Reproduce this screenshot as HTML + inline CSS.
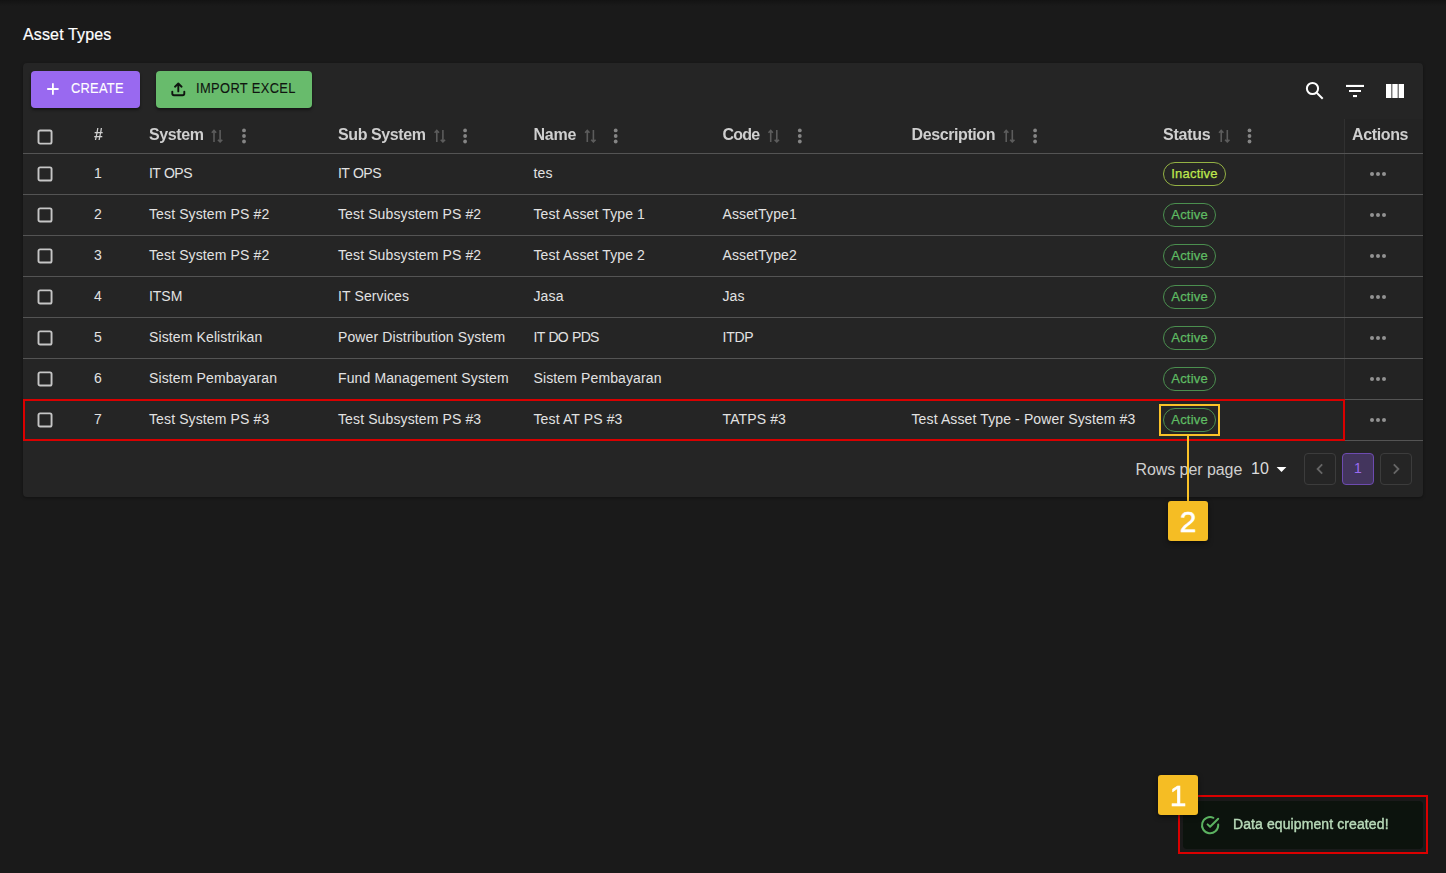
<!DOCTYPE html>
<html lang="en">
<head>
<meta charset="utf-8">
<title>Asset Types</title>
<style>
*{box-sizing:border-box;margin:0;padding:0}
html,body{width:1446px;height:873px;overflow:hidden}
body{background:#1a1a1a;font-family:"Liberation Sans",sans-serif;color:#e2e2e2;position:relative;font-size:14px}
.topshade{position:absolute;left:0;top:0;width:1446px;height:6px;background:linear-gradient(#131313,#1a1a1a)}
h1{position:absolute;left:23px;top:26px;font-size:16px;font-weight:400;line-height:18px;color:#fff;letter-spacing:.15px;white-space:nowrap;-webkit-text-stroke:.2px #fff}
.card{position:absolute;left:23px;top:63px;width:1400px;height:434px;background:#252525;border-radius:4px;box-shadow:0 1px 3px rgba(0,0,0,.35)}
.toolbar{position:absolute;left:0;top:0;width:1400px;height:53px}
.btn{position:absolute;top:8px;height:37px;border-radius:4px;font-size:14px;line-height:37px;white-space:nowrap;box-shadow:0 2px 3px rgba(0,0,0,.45)}
.btn svg{position:absolute}
.btn span{position:absolute;top:-1px;display:inline-block;transform-origin:0 50%;transform:scaleX(.92)}
.b-create{left:8px;width:109px;background:#9969f0;color:#fff}
.b-create span{left:40px;letter-spacing:.28px;-webkit-text-stroke:.12px #fff}
.b-import{left:133px;width:156px;background:#68bb6c;color:#101510}
.b-import span{left:39.5px;letter-spacing:.4px;-webkit-text-stroke:.12px #101510}
.ticon{position:absolute}
/* table */
.row{position:absolute;left:0;width:1400px;height:41px;border-bottom:1px solid #545454}
.hrow{top:53px;height:38px;will-change:transform}
.cell{position:absolute;top:0;height:100%;white-space:nowrap;letter-spacing:.12px}
.row .cell{line-height:39px}
.hrow .cell{line-height:38px;font-size:16px;font-weight:700;color:#cfcfcf}
.cb{position:absolute;left:14px;width:17px;height:17px}
.row .cb{top:12px}
.hrow .cb{top:13px}
.c1{left:71px}.c2{left:126px}.c3{left:315px}.c4{left:510.5px}.c5{left:699.5px}.c6{left:888.5px}.c7{left:1140px}
.act{position:absolute;left:1321px;top:0;width:79px;height:40px;background:#232323;border-left:1px solid #313131}
.hrow .act{height:34px;top:3px}
.act b{position:absolute;left:7px;top:-3px;line-height:38px;font-size:16px;font-weight:700;color:#cfcfcf;letter-spacing:-.37px}
.dots{position:absolute;left:24.8px;top:17.8px;width:17px;height:5px}
.dots i{position:absolute;top:0;width:4.4px;height:4.4px;border-radius:50%;background:#929292}
.dots i:nth-child(1){left:0}.dots i:nth-child(2){left:6.1px}.dots i:nth-child(3){left:12.2px}
.sort{position:absolute;top:12px}
.keb{position:absolute;top:12px}
.chip{position:absolute;left:0;top:8px;height:24px;border-radius:12px;border:1px solid;font-size:13px;line-height:22px;padding:0 0 0 7.3px;letter-spacing:.2px;-webkit-text-stroke:.25px}
.chip.a{color:#5fbb63;border-color:#4b8f4f;width:53px}
.chip.i{color:#bfe84e;border-color:#94b244;width:63px}
/* footer */
.rpp{position:absolute;left:1112.5px;top:397px;font-size:16px;line-height:20px;color:#cfcfcf;letter-spacing:-.07px;white-space:nowrap}
.rpn{position:absolute;left:1228px;top:396px;font-size:16px;line-height:20px;color:#dcdcdc;white-space:nowrap}
.tri{position:absolute;left:1253px;top:403px}
.pg{position:absolute;top:390px;width:32px;height:32px;border:1px solid #3c3c3c;border-radius:4px;text-align:center;line-height:29px;font-size:14px}
.pg.on{background:#43355d;border-color:#6d4bb0;color:#9b6bf2}
.pg svg{position:absolute;left:9px;top:9px}
/* annotations */
.red{position:absolute;border:2px solid #da0000}
.yel{position:absolute;border:2px solid #fbc328}
.badge{position:absolute;width:40px;height:40px;background:#f5bd24;border-radius:3px;color:#fff;font-size:30px;line-height:41px;text-align:center;-webkit-text-stroke:.5px #fff;box-shadow:0 2px 5px rgba(0,0,0,.5)}
.vline{position:absolute;left:1187px;top:436px;width:2px;height:66px;background:#fbc328}
.toast{position:absolute;left:1183px;top:801px;width:240px;height:48px;background:#0c130d;border-radius:4px;will-change:transform}
.toast span{position:absolute;left:50px;top:14px;font-size:14px;line-height:18px;color:#b8dab9;letter-spacing:.1px;white-space:nowrap;-webkit-text-stroke:.4px #b8dab9}
.toast svg{position:absolute;left:17px;top:14px;overflow:visible}
</style>
</head>
<body>
<div class="topshade"></div>
<h1>Asset Types</h1>

<div class="card">
  <div class="toolbar">
    <div class="btn b-create">
      <svg style="left:15px;top:11px" width="14" height="14" viewBox="0 0 14 14"><path d="M6.9 1.3v11.4M1.2 7h11.4" stroke="#fff" stroke-width="1.8" fill="none"/></svg>
      <span>CREATE</span>
    </div>
    <div class="btn b-import">
      <svg style="left:15px;top:11px" width="15" height="15" viewBox="0 0 15 15" fill="none" stroke="#101510" stroke-width="1.9" stroke-linecap="round" stroke-linejoin="round"><path d="M7.3 9.4V1.7M4 4.7l3.3-3.2 3.3 3.2M1.3 9.6v1.9c0 1 .8 1.7 1.7 1.7h8.6c1 0 1.7-.8 1.7-1.7V9.6"/></svg>
      <span>IMPORT EXCEL</span>
    </div>
    <svg class="ticon" style="left:1282px;top:18px" width="19" height="19" viewBox="0 0 19 19" fill="none" stroke="#fff" stroke-width="2"><circle cx="7.5" cy="7.5" r="5.6"/><path d="M11.7 11.7l6 6"/></svg>
    <svg class="ticon" style="left:1323px;top:21px" width="18" height="14" viewBox="0 0 18 14" fill="#fff"><rect x="0" y="0.9" width="18" height="2.1"/><rect x="3" y="6" width="12" height="2"/><rect x="7" y="11" width="4" height="2.1"/></svg>
    <svg class="ticon" style="left:1363px;top:21px" width="18" height="14" viewBox="0 0 18 14" fill="#fff"><rect x="0" y="0" width="5.4" height="14"/><rect x="6.3" y="0" width="5.4" height="14"/><rect x="12.6" y="0" width="5.4" height="14"/></svg>
  </div>

  <div class="row hrow">
    <svg class="cb" viewBox="0 0 17 17"><rect x="1.5" y="1.55" width="13.05" height="13.1" rx="1.6" fill="none" stroke="#c6c6c6" stroke-width="1.9"/></svg>
    <div class="cell c1">#</div>
    <div class="cell c2" style="letter-spacing:-.4px">System</div>
    <svg class="sort" style="left:188px" width="13" height="15" viewBox="0 0 13 15" fill="none" stroke="#5c5c5c" stroke-width="1.6"><path transform="translate(0.0 .6)" d="M3 13.5V1.9M.8 4.1L3 1.9l2.2 2.2M9.1 1.5v11.8M6.9 11.1l2.2 2.2 2.2-2.2"/></svg>
    <svg class="keb" style="left:218px" width="7" height="18" viewBox="0 0 7 18" fill="#858585"><circle cx="3.0" cy="2.4" r="1.9"/><circle cx="3.0" cy="8" r="1.9"/><circle cx="3.0" cy="13.5" r="1.9"/></svg>
    <div class="cell c3" style="letter-spacing:-.4px">Sub System</div>
    <svg class="sort" style="left:410px" width="13" height="15" viewBox="0 0 13 15" fill="none" stroke="#5c5c5c" stroke-width="1.6"><path transform="translate(0.8 .6)" d="M3 13.5V1.9M.8 4.1L3 1.9l2.2 2.2M9.1 1.5v11.8M6.9 11.1l2.2 2.2 2.2-2.2"/></svg>
    <svg class="keb" style="left:439px" width="7" height="18" viewBox="0 0 7 18" fill="#858585"><circle cx="3.1" cy="2.4" r="1.9"/><circle cx="3.1" cy="8" r="1.9"/><circle cx="3.1" cy="13.5" r="1.9"/></svg>
    <div class="cell c4" style="letter-spacing:-.2px">Name</div>
    <svg class="sort" style="left:561px" width="13" height="15" viewBox="0 0 13 15" fill="none" stroke="#5c5c5c" stroke-width="1.6"><path transform="translate(0.3 .6)" d="M3 13.5V1.9M.8 4.1L3 1.9l2.2 2.2M9.1 1.5v11.8M6.9 11.1l2.2 2.2 2.2-2.2"/></svg>
    <svg class="keb" style="left:589px" width="7" height="18" viewBox="0 0 7 18" fill="#858585"><circle cx="3.7" cy="2.4" r="1.9"/><circle cx="3.7" cy="8" r="1.9"/><circle cx="3.7" cy="13.5" r="1.9"/></svg>
    <div class="cell c5" style="letter-spacing:-.8px">Code</div>
    <svg class="sort" style="left:744px" width="13" height="15" viewBox="0 0 13 15" fill="none" stroke="#5c5c5c" stroke-width="1.6"><path transform="translate(0.7 .6)" d="M3 13.5V1.9M.8 4.1L3 1.9l2.2 2.2M9.1 1.5v11.8M6.9 11.1l2.2 2.2 2.2-2.2"/></svg>
    <svg class="keb" style="left:773px" width="7" height="18" viewBox="0 0 7 18" fill="#858585"><circle cx="3.8" cy="2.4" r="1.9"/><circle cx="3.8" cy="8" r="1.9"/><circle cx="3.8" cy="13.5" r="1.9"/></svg>
    <div class="cell c6" style="letter-spacing:-.4px">Description</div>
    <svg class="sort" style="left:980px" width="13" height="15" viewBox="0 0 13 15" fill="none" stroke="#5c5c5c" stroke-width="1.6"><path transform="translate(0.2 .6)" d="M3 13.5V1.9M.8 4.1L3 1.9l2.2 2.2M9.1 1.5v11.8M6.9 11.1l2.2 2.2 2.2-2.2"/></svg>
    <svg class="keb" style="left:1009px" width="7" height="18" viewBox="0 0 7 18" fill="#858585"><circle cx="3.1" cy="2.4" r="1.9"/><circle cx="3.1" cy="8" r="1.9"/><circle cx="3.1" cy="13.5" r="1.9"/></svg>
    <div class="cell c7" style="letter-spacing:-.23px">Status</div>
    <svg class="sort" style="left:1195px" width="13" height="15" viewBox="0 0 13 15" fill="none" stroke="#5c5c5c" stroke-width="1.6"><path transform="translate(0.2 .6)" d="M3 13.5V1.9M.8 4.1L3 1.9l2.2 2.2M9.1 1.5v11.8M6.9 11.1l2.2 2.2 2.2-2.2"/></svg>
    <svg class="keb" style="left:1223px" width="7" height="18" viewBox="0 0 7 18" fill="#858585"><circle cx="3.5" cy="2.4" r="1.9"/><circle cx="3.5" cy="8" r="1.9"/><circle cx="3.5" cy="13.5" r="1.9"/></svg>
    <div class="act"><b>Actions</b></div>
  </div>

  <div class="row" style="top:91px"><svg class="cb" viewBox="0 0 17 17"><rect x="1.5" y="1.4" width="13.05" height="13.1" rx="1.6" fill="none" stroke="#c6c6c6" stroke-width="1.9"/></svg><div class="cell c1">1</div><div class="cell c2"><span style="letter-spacing:-.55px;word-spacing:.6px">IT OPS</span></div><div class="cell c3"><span style="letter-spacing:-.55px;word-spacing:.6px">IT OPS</span></div><div class="cell c4">tes</div><div class="cell c5"></div><div class="cell c6"></div><div class="cell c7"><span class="chip i">Inactive</span></div><div class="act"><span class="dots"><i></i><i></i><i></i></span></div></div>
  <div class="row" style="top:132px"><svg class="cb" viewBox="0 0 17 17"><rect x="1.5" y="1.4" width="13.05" height="13.1" rx="1.6" fill="none" stroke="#c6c6c6" stroke-width="1.9"/></svg><div class="cell c1">2</div><div class="cell c2">Test System PS #2</div><div class="cell c3">Test Subsystem PS #2</div><div class="cell c4">Test Asset Type 1</div><div class="cell c5">AssetType1</div><div class="cell c6"></div><div class="cell c7"><span class="chip a">Active</span></div><div class="act"><span class="dots"><i></i><i></i><i></i></span></div></div>
  <div class="row" style="top:173px"><svg class="cb" viewBox="0 0 17 17"><rect x="1.5" y="1.4" width="13.05" height="13.1" rx="1.6" fill="none" stroke="#c6c6c6" stroke-width="1.9"/></svg><div class="cell c1">3</div><div class="cell c2">Test System PS #2</div><div class="cell c3">Test Subsystem PS #2</div><div class="cell c4">Test Asset Type 2</div><div class="cell c5">AssetType2</div><div class="cell c6"></div><div class="cell c7"><span class="chip a">Active</span></div><div class="act"><span class="dots"><i></i><i></i><i></i></span></div></div>
  <div class="row" style="top:214px"><svg class="cb" viewBox="0 0 17 17"><rect x="1.5" y="1.4" width="13.05" height="13.1" rx="1.6" fill="none" stroke="#c6c6c6" stroke-width="1.9"/></svg><div class="cell c1">4</div><div class="cell c2"><span style="letter-spacing:-.05px">ITSM</span></div><div class="cell c3">IT Services</div><div class="cell c4">Jasa</div><div class="cell c5">Jas</div><div class="cell c6"></div><div class="cell c7"><span class="chip a">Active</span></div><div class="act"><span class="dots"><i></i><i></i><i></i></span></div></div>
  <div class="row" style="top:255px"><svg class="cb" viewBox="0 0 17 17"><rect x="1.5" y="1.4" width="13.05" height="13.1" rx="1.6" fill="none" stroke="#c6c6c6" stroke-width="1.9"/></svg><div class="cell c1">5</div><div class="cell c2">Sistem Kelistrikan</div><div class="cell c3">Power Distribution System</div><div class="cell c4"><span style="letter-spacing:-.7px;word-spacing:.9px">IT DO PDS</span></div><div class="cell c5"><span style="letter-spacing:-.25px">ITDP</span></div><div class="cell c6"></div><div class="cell c7"><span class="chip a">Active</span></div><div class="act"><span class="dots"><i></i><i></i><i></i></span></div></div>
  <div class="row" style="top:296px"><svg class="cb" viewBox="0 0 17 17"><rect x="1.5" y="1.4" width="13.05" height="13.1" rx="1.6" fill="none" stroke="#c6c6c6" stroke-width="1.9"/></svg><div class="cell c1">6</div><div class="cell c2">Sistem Pembayaran</div><div class="cell c3">Fund Management System</div><div class="cell c4">Sistem Pembayaran</div><div class="cell c5"></div><div class="cell c6"></div><div class="cell c7"><span class="chip a">Active</span></div><div class="act"><span class="dots"><i></i><i></i><i></i></span></div></div>
  <div class="row" style="top:337px"><svg class="cb" viewBox="0 0 17 17"><rect x="1.5" y="1.4" width="13.05" height="13.1" rx="1.6" fill="none" stroke="#c6c6c6" stroke-width="1.9"/></svg><div class="cell c1">7</div><div class="cell c2">Test System PS #3</div><div class="cell c3">Test Subsystem PS #3</div><div class="cell c4">Test AT PS #3</div><div class="cell c5">TATPS #3</div><div class="cell c6">Test Asset Type - Power System #3</div><div class="cell c7"><span class="chip a">Active</span></div><div class="act"><span class="dots"><i></i><i></i><i></i></span></div></div>

  <div class="rpp">Rows per page</div>
  <div class="rpn">10</div>
  <svg class="tri" width="12" height="8" viewBox="0 0 12 8"><path d="M.6 1h9.8L5.5 6z" fill="#fff"/></svg>
  <div class="pg" style="left:1281px"><svg width="12" height="12" viewBox="0 0 12 12" fill="none" stroke="#666" stroke-width="1.8"><path d="M8.2 1.4L3.6 6l4.6 4.6"/></svg></div>
  <div class="pg on" style="left:1319px">1</div>
  <div class="pg" style="left:1357px"><svg width="12" height="12" viewBox="0 0 12 12" fill="none" stroke="#666" stroke-width="1.8"><path d="M3.8 1.4L8.4 6l-4.6 4.6"/></svg></div>
</div>

<!-- annotations -->
<div class="red" style="left:23px;top:399px;width:1322px;height:42px"></div>
<div class="yel" style="left:1159px;top:404px;width:61px;height:32px"></div>
<div class="vline"></div>
<div class="badge" style="left:1168px;top:501px">2</div>

<div class="red" style="left:1178px;top:795px;width:250px;height:59px"></div>
<div class="toast">
  <svg width="20" height="20" viewBox="0 0 20 20" fill="none" stroke="#5bb260" stroke-width="2" stroke-linecap="round" stroke-linejoin="round"><g transform="translate(.6 .7)"><path d="M17.6 8.7v.8a8.1 8.1 0 1 1-4.8-7.4"/><path d="M17.6 3L9.5 11.1 7 8.7"/></g></svg>
  <span>Data equipment created!</span>
</div>
<div class="badge" style="left:1158px;top:775px">1</div>
</body>
</html>
